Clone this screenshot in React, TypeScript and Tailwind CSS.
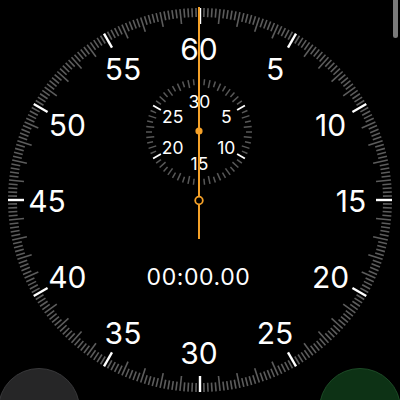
import React from 'react';

const ORANGE = '#f5a128';
const CX = 200;
const CY = 200;
const SUB_CY = 132;

const polar = (cx: number, cy: number, r: number, deg: number) => {
  const a = (deg * Math.PI) / 180;
  return { x: cx + r * Math.sin(a), y: cy - r * Math.cos(a) };
};

const MainTicks: React.FC = () => (
  <g>
    {Array.from({ length: 300 }).map((_, i) => {
      const deg = i * 1.2;
      const major = i % 25 === 0;
      const second = i % 5 === 0;
      const inner = major ? 176 : second ? 177 : 183;
      const p1 = polar(CX, CY, 192, deg);
      const p2 = polar(CX, CY, inner, deg);
      return (
        <line
          key={i}
          x1={p1.x}
          y1={p1.y}
          x2={p2.x}
          y2={p2.y}
          stroke={major ? '#ffffff' : '#5c5c5c'}
          strokeWidth={major ? 2.4 : 1.6}
        />
      );
    })}
  </g>
);

const SubTicks: React.FC = () => (
  <g>
    {Array.from({ length: 60 }).map((_, i) => {
      const deg = i * 6;
      const major = i % 10 === 0;
      const inner = major ? 44 : i % 2 === 0 ? 45 : 47;
      const p1 = polar(199, SUB_CY, 53, deg);
      const p2 = polar(199, SUB_CY, inner, deg);
      return (
        <line
          key={i}
          x1={p1.x}
          y1={p1.y}
          x2={p2.x}
          y2={p2.y}
          stroke={major ? '#ffffff' : '#585858'}
          strokeWidth={major ? 1.8 : 1.5}
        />
      );
    })}
  </g>
);

export default function App() {
  return (
    <div className="relative w-[400px] h-[400px] bg-black overflow-hidden font-['Inter','Liberation_Sans',sans-serif]">
      <svg width="400" height="400" viewBox="0 0 400 400" className="block">
        <MainTicks />
        {Array.from({ length: 12 }).map((_, i) => {
          const p = polar(199, 201, 152, i * 30);
          return (
            <text
              key={i}
              x={p.x}
              y={p.y}
              fill="#ffffff"
              fontSize="30"
              textAnchor="middle"
              dominantBaseline="central"
              fontFamily="Inter, 'Liberation Sans', sans-serif"
            >
              {i === 0 ? 60 : i * 5}
            </text>
          );
        })}

        <SubTicks />
        {Array.from({ length: 6 }).map((_, i) => {
          const p = polar(199.5, SUB_CY, 31, i * 60);
          return (
            <text
              key={i}
              x={p.x}
              y={p.y}
              fill="#ffffff"
              fontSize="17.5"
              textAnchor="middle"
              dominantBaseline="central"
              fontFamily="Inter, 'Liberation Sans', sans-serif"
            >
              {i === 0 ? 30 : i * 5}
            </text>
          );
        })}

        <text
          x="198.5"
          y="277"
          fill="#ffffff"
          fontSize="23"
          letterSpacing="0.6"
          textAnchor="middle"
          dominantBaseline="central"
          fontFamily="Inter, 'Liberation Sans', sans-serif"
        >
          00:00.00
        </text>

        {/* hand */}
        <line x1="199" y1="7" x2="199" y2="239" stroke={ORANGE} strokeWidth="2" />
        <circle cx="199" cy="131" r="3.6" fill={ORANGE} />
        <circle cx="199" cy="200.5" r="3.8" fill="#000000" stroke={ORANGE} strokeWidth="1.8" />
      </svg>

      <div className="absolute right-[2px] top-0 w-[5px] h-[38px] rounded-b-full bg-[#7a7a7a]" />

      <button className="absolute left-[-2px] top-[368px] w-[82px] h-[82px] rounded-full bg-[#262627] border border-[#38383a]" />
      <button className="absolute left-[319px] top-[368px] w-[82px] h-[82px] rounded-full bg-[#0d3215] border border-[#1c4a26]" />
    </div>
  );
}
